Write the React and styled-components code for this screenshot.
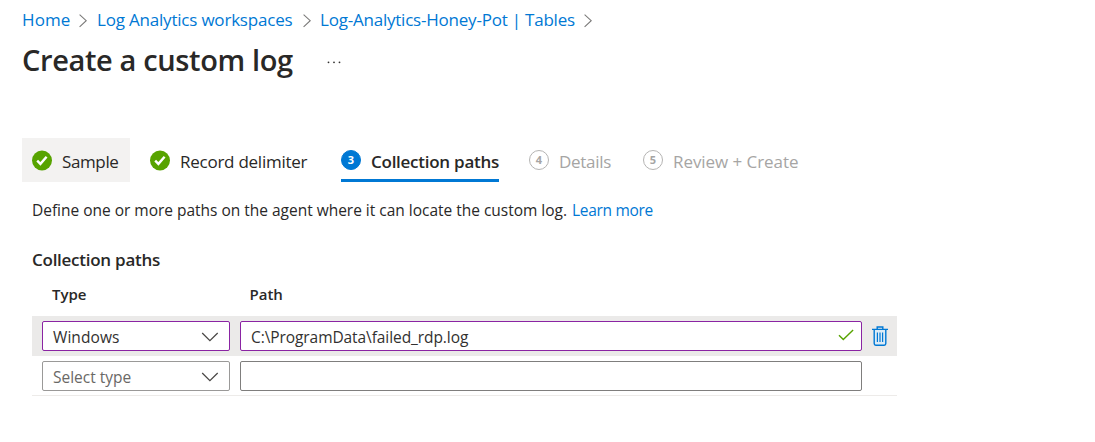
import React from "react";
import styled, { createGlobalStyle } from "styled-components";

const GlobalStyle = createGlobalStyle`
  * { box-sizing: border-box; }
  body {
    margin: 0;
    background: #fff;
    color: #292827;
    font-family: "Open Sans", "Segoe UI", sans-serif;
  }
`;

const Page = styled.main`
  display: flex;
  flex-direction: column;
  align-items: flex-start;
  height: 442px;
  padding: 10px 0 0 22px;
  overflow: hidden;
  white-space: nowrap;
`;

const Breadcrumbs = styled.nav`
  display: flex;
  height: 20px;
  font-size: 17px;
  line-height: 20px;
`;

const Crumb = styled.a`
  width: ${(p) => p.$width}px;
  letter-spacing: ${(p) => p.$tracking}px;
  color: #0078d4;
`;

const CrumbArrow = styled.svg`
  width: 8px;
  height: 14px;
  margin: 4px ${(p) => p.$after ?? 9}px 0 0;
  fill: none;
  stroke: #7a7978;
  stroke-width: 1.1;
`;

const TitleBar = styled.header`
  display: flex;
  height: 40px;
  margin-top: 10px;
`;

const Title = styled.h1`
  width: 305px;
  margin: 0;
  font-size: 29px;
  font-weight: 600;
  line-height: 40px;
  letter-spacing: -0.366px;
`;

const MoreDots = styled.svg`
  width: 14px;
  height: 4px;
  margin-top: 20px;
  fill: #323130;
`;

const Steps = styled.div`
  display: flex;
  height: 44px;
  margin-top: 58px;
`;

const Step = styled.div`
  display: flex;
  width: ${(p) => p.$width}px;
  margin-right: ${(p) => p.$gap ?? 0}px;
  padding: 12px 0 0 ${(p) => (p.$visited ? 10 : 0)}px;
  background: ${(p) => (p.$visited ? "#f3f2f1" : "transparent")};
  border-bottom: ${(p) => (p.$active ? "3px solid #0078d4" : "0")};
  color: ${(p) => (p.$disabled ? "#a6a5a4" : "#292827")};
`;

const StepLabel = styled.span`
  margin-left: 10px;
  font-size: 17px;
  font-weight: ${(p) => (p.$bold ? 600 : 400)};
  line-height: 24px;
  letter-spacing: ${(p) => p.$tracking}px;
`;

const StepNumber = styled.span`
  flex: none;
  width: 20px;
  height: 20px;
  border: 1px solid ${(p) => (p.$active ? "#0078d4" : "#b5b4b3")};
  border-radius: 50%;
  background: ${(p) => (p.$active ? "#0078d4" : "#fff")};
  color: ${(p) => (p.$active ? "#fff" : "#a6a5a4")};
  font-size: 11px;
  font-weight: 700;
  line-height: 18px;
  text-align: center;
`;

const DoneIcon = styled.svg`
  flex: none;
  width: 20px;
  height: 21px;
`;

const Section = styled.section`
  display: flex;
  flex-direction: column;
  width: 875px;
  padding: 18px 0 0 10px;
`;

const Description = styled.p`
  display: flex;
  margin: 0;
  font-size: 15.5px;
  line-height: 20px;
`;

const Copy = styled.span`
  width: 540px;
  letter-spacing: -0.015px;
`;

const Link = styled.a`
  color: #0078d4;
  letter-spacing: -0.3px;
`;

const SectionTitle = styled.h2`
  margin: 30px 0 0;
  font-size: 17px;
  font-weight: 600;
  line-height: 20px;
  letter-spacing: -0.26px;
`;

const Columns = styled.div`
  display: grid;
  grid-template-columns: 197.5px 1fr;
  padding: 14px 0 12px 20px;
  font-size: 15px;
  font-weight: 600;
  line-height: 20px;
`;

const Row = styled.div`
  display: flex;
  align-items: flex-start;
  height: 40px;
  padding: 5px 9px 0 10px;
  background: ${(p) => (p.$hovered ? "#ebeae9" : "#fff")};
  border-bottom: ${(p) => (p.$hovered ? "0" : "1px solid #edebe9")};
`;

const Field = styled.div`
  display: flex;
  flex: none;
  justify-content: space-between;
  width: ${(p) => p.$width}px;
  height: 30px;
  margin-right: 10px;
  padding: 0 ${(p) => p.$end ?? 10}px 0 10px;
  border: 1px solid ${(p) => (p.$edited ? "#8a24a3" : p.$soft ? "#9a9998" : "#7f7e7d")};
  border-radius: 2px;
  background: #fff;
  color: ${(p) => (p.$placeholder ? "#6a6866" : "#323130")};
  font-size: 15.5px;
  line-height: 30px;
  letter-spacing: ${(p) => p.$tracking ?? 0}px;
`;

const Chevron = styled.svg`
  width: 18px;
  height: 10px;
  margin-top: 10px;
  fill: none;
  stroke: #484644;
  stroke-width: 1.25;
`;

const ValidMark = styled.svg`
  width: 16px;
  height: 12px;
  margin-top: 7px;
  fill: none;
  stroke: #57a300;
  stroke-width: 1.4;
`;

const Trash = styled.svg`
  flex: none;
  width: 16px;
  height: 20px;
  margin-top: 5px;
  fill: none;
  stroke: #0078d4;
`;

const Arrow = ({ after }) => (
  <CrumbArrow $after={after} viewBox="0 0 8 14">
    <path d="M.6.7 7.2 6.7.6 12.8" />
  </CrumbArrow>
);

const Done = () => (
  <DoneIcon viewBox="0 0 20 21">
    <circle cx="10" cy="10.5" r="10" fill="#57a300" />
    <path d="m5.2 10.7 3.2 3.2 6.2-7.2" fill="none" stroke="#fff" strokeWidth="2.4" />
  </DoneIcon>
);

const Down = () => (
  <Chevron viewBox="0 0 18 10">
    <path d="m1.2 1 7.7 7.6L16.7 1" />
  </Chevron>
);

export default function App() {
  return (
    <>
      <GlobalStyle />
      <Page>
        <Breadcrumbs>
          <Crumb $width={57} $tracking={0.1}>Home</Crumb>
          <Arrow after={10} />
          <Crumb $width={206} $tracking={-0.2}>Log Analytics workspaces</Crumb>
          <Arrow />
          <Crumb $width={264} $tracking={-0.218}>Log-Analytics-Honey-Pot | Tables</Crumb>
          <Arrow />
        </Breadcrumbs>

        <TitleBar>
          <Title>Create a custom log</Title>
          <MoreDots viewBox="0 0 14 4">
            <circle cx="1.5" cy="2.3" r=".9" />
            <circle cx="7" cy="2.3" r=".9" />
            <circle cx="12.5" cy="2.3" r=".9" />
          </MoreDots>
        </TitleBar>

        <Steps>
          <Step $width={108} $gap={20} $visited>
            <Done />
            <StepLabel $tracking={-0.38}>Sample</StepLabel>
          </Step>
          <Step $width={158} $gap={33}>
            <Done />
            <StepLabel $tracking={-0.25}>Record delimiter</StepLabel>
          </Step>
          <Step $width={158} $gap={30} $active>
            <StepNumber $active>3</StepNumber>
            <StepLabel $bold $tracking={-0.26}>Collection paths</StepLabel>
          </Step>
          <Step $width={82} $gap={32} $disabled>
            <StepNumber>4</StepNumber>
            <StepLabel $tracking={-0.3}>Details</StepLabel>
          </Step>
          <Step $width={156} $disabled>
            <StepNumber>5</StepNumber>
            <StepLabel $tracking={-0.057}>Review + Create</StepLabel>
          </Step>
        </Steps>

        <Section>
          <Description>
            <Copy>Define one or more paths on the agent where it can locate the custom log.</Copy>
            <Link>Learn more</Link>
          </Description>
          <SectionTitle>Collection paths</SectionTitle>
          <Columns>
            <span>Type</span>
            <span>Path</span>
          </Columns>
          <Row $hovered>
            <Field $width={188} $edited $tracking={0.075}>
              Windows
              <Down />
            </Field>
            <Field $width={622} $edited $end={7} $tracking={-0.08}>
              {"C:\\ProgramData\\failed_rdp.log"}
              <ValidMark viewBox="0 0 16 12">
                <path d="m1 6.2 4.3 4.4L15.1 1" />
              </ValidMark>
            </Field>
            <Trash viewBox="0 0 16 20">
              <path d="M2.2 4v13.6q0 1.6 1.6 1.6h8.4q1.6 0 1.6-1.6V4" strokeWidth="1.4" fill="#dcebf6" />
              <path d="M0 3.4h16M5.2 3V1h5.6v2" strokeWidth="1.4" />
              <path d="M5.4 6.5v9.5M8 6.5v9.5M10.6 6.5v9.5" strokeWidth="1.2" />
            </Trash>
          </Row>
          <Row>
            <Field $width={188} $soft $placeholder>
              Select type
              <Down />
            </Field>
            <Field $width={622} />
          </Row>
        </Section>
      </Page>
    </>
  );
}
